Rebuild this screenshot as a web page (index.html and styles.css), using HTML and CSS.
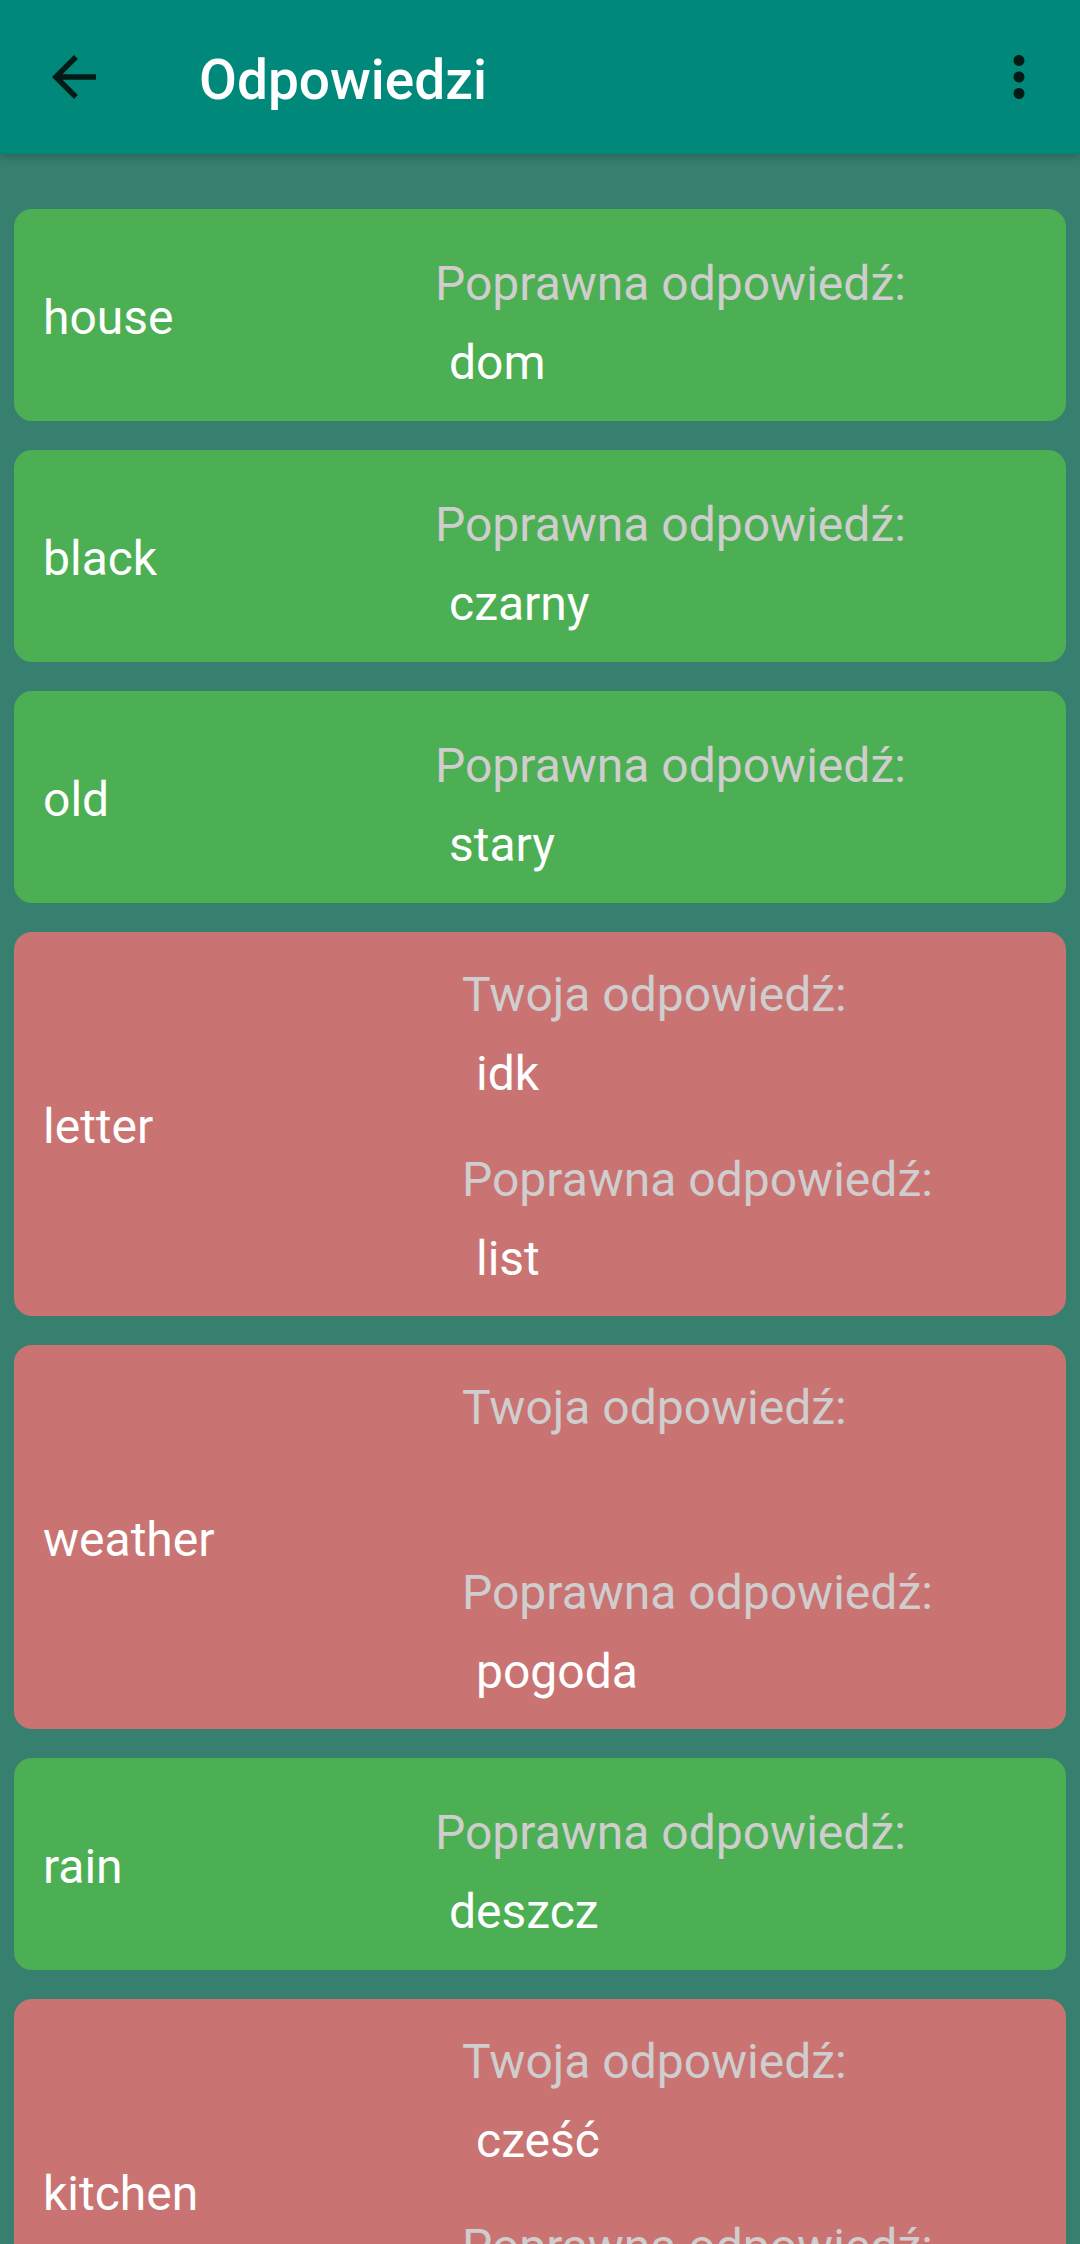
FILE: index.html
```html
<!DOCTYPE html>
<html lang="pl">
<head>
<meta charset="utf-8">
<title>Odpowiedzi</title>
<link rel="stylesheet" href="styles.css">
</head>
<body>
<div class="app">
  <header class="toolbar">
    <svg class="icon back" viewBox="0 0 24 24" width="66" height="66"><path d="M20 11H7.83l5.59-5.59L12 4l-8 8 8 8 1.41-1.41L7.83 13H20v-2z"/></svg>
    <h1 class="title">Odpowiedzi</h1>
    <svg class="icon more" viewBox="0 0 24 24" width="66" height="66"><path d="M12 8c1.1 0 2-.9 2-2s-.9-2-2-2-2 .9-2 2 .9 2 2 2zm0 2c-1.1 0-2 .9-2 2s.9 2 2 2 2-.9 2-2-.9-2-2-2zm0 6c-1.1 0-2 .9-2 2s.9 2 2 2 2-.9 2-2-.9-2-2-2z"/></svg>
  </header>
  <main class="list">
    <div class="card ok">
      <div class="word">house</div>
      <div class="answers">
        <div class="label">Poprawna odpowiedź:</div>
        <div class="value">dom</div>
      </div>
    </div>
    <div class="card ok">
      <div class="word">black</div>
      <div class="answers">
        <div class="label">Poprawna odpowiedź:</div>
        <div class="value">czarny</div>
      </div>
    </div>
    <div class="card ok">
      <div class="word">old</div>
      <div class="answers">
        <div class="label">Poprawna odpowiedź:</div>
        <div class="value">stary</div>
      </div>
    </div>
    <div class="card bad">
      <div class="word">letter</div>
      <div class="answers">
        <div class="label">Twoja odpowiedź:</div>
        <div class="value">idk</div>
        <div class="label second">Poprawna odpowiedź:</div>
        <div class="value">list</div>
      </div>
    </div>
    <div class="card bad">
      <div class="word">weather</div>
      <div class="answers">
        <div class="label">Twoja odpowiedź:</div>
        <div class="value"></div>
        <div class="label second">Poprawna odpowiedź:</div>
        <div class="value">pogoda</div>
      </div>
    </div>
    <div class="card ok">
      <div class="word">rain</div>
      <div class="answers">
        <div class="label">Poprawna odpowiedź:</div>
        <div class="value">deszcz</div>
      </div>
    </div>
    <div class="card bad">
      <div class="word">kitchen</div>
      <div class="answers">
        <div class="label">Twoja odpowiedź:</div>
        <div class="value">cześć</div>
        <div class="label second">Poprawna odpowiedź:</div>
        <div class="value">kuchnia</div>
      </div>
    </div>
  </main>
</div>
</body>
</html>
```
FILE: styles.css
```css
html, body {
  margin: 0;
  padding: 0;
}
body {
  width: 1080px;
  height: 2244px;
  overflow: hidden;
  background: #377f6f;
  font-family: Roboto, "Noto Sans", "Liberation Sans", sans-serif;
}
.app {
  display: flex;
  flex-direction: column;
}
.toolbar {
  position: relative;
  z-index: 2;
  height: 154px;
  background: #00887a;
  display: flex;
  align-items: center;
  padding: 0 28px 0 41px;
  box-shadow: 0 3px 8px rgba(0, 0, 0, 0.22);
}
.icon {
  flex: none;
  fill: #041a17;
}
.title {
  margin: 6px 0 0 92px;
  flex: 1;
  font-size: 55px;
  font-weight: 500;
  line-height: 64px;
  color: #ffffff;
}
.list {
  display: flex;
  flex-direction: column;
  gap: 29px;
  padding: 55px 14px 0 14px;
}
.card {
  display: flex;
  align-items: center;
  border-radius: 18px;
  color: #ffffff;
}
.card.ok {
  background: #4caf53;
}
.card.bad {
  background: #c97473;
}
.word {
  flex: none;
  width: 392px;
  padding: 6px 0 0 29px;
  font-size: 48px;
  line-height: 58px;
}
.answers {
  display: flex;
  flex-direction: column;
  align-items: flex-start;
  padding: 46px 0 29px 0;
}
.bad .answers {
  padding: 34px 0 28px 27px;
}
.label {
  font-size: 48px;
  line-height: 58px;
  color: #cfcdcd;
}
.label.second {
  margin-top: 48px;
}
.value {
  margin: 21px 0 0 14px;
  min-height: 58px;
  font-size: 48px;
  line-height: 58px;
  color: #ffffff;
}
```
